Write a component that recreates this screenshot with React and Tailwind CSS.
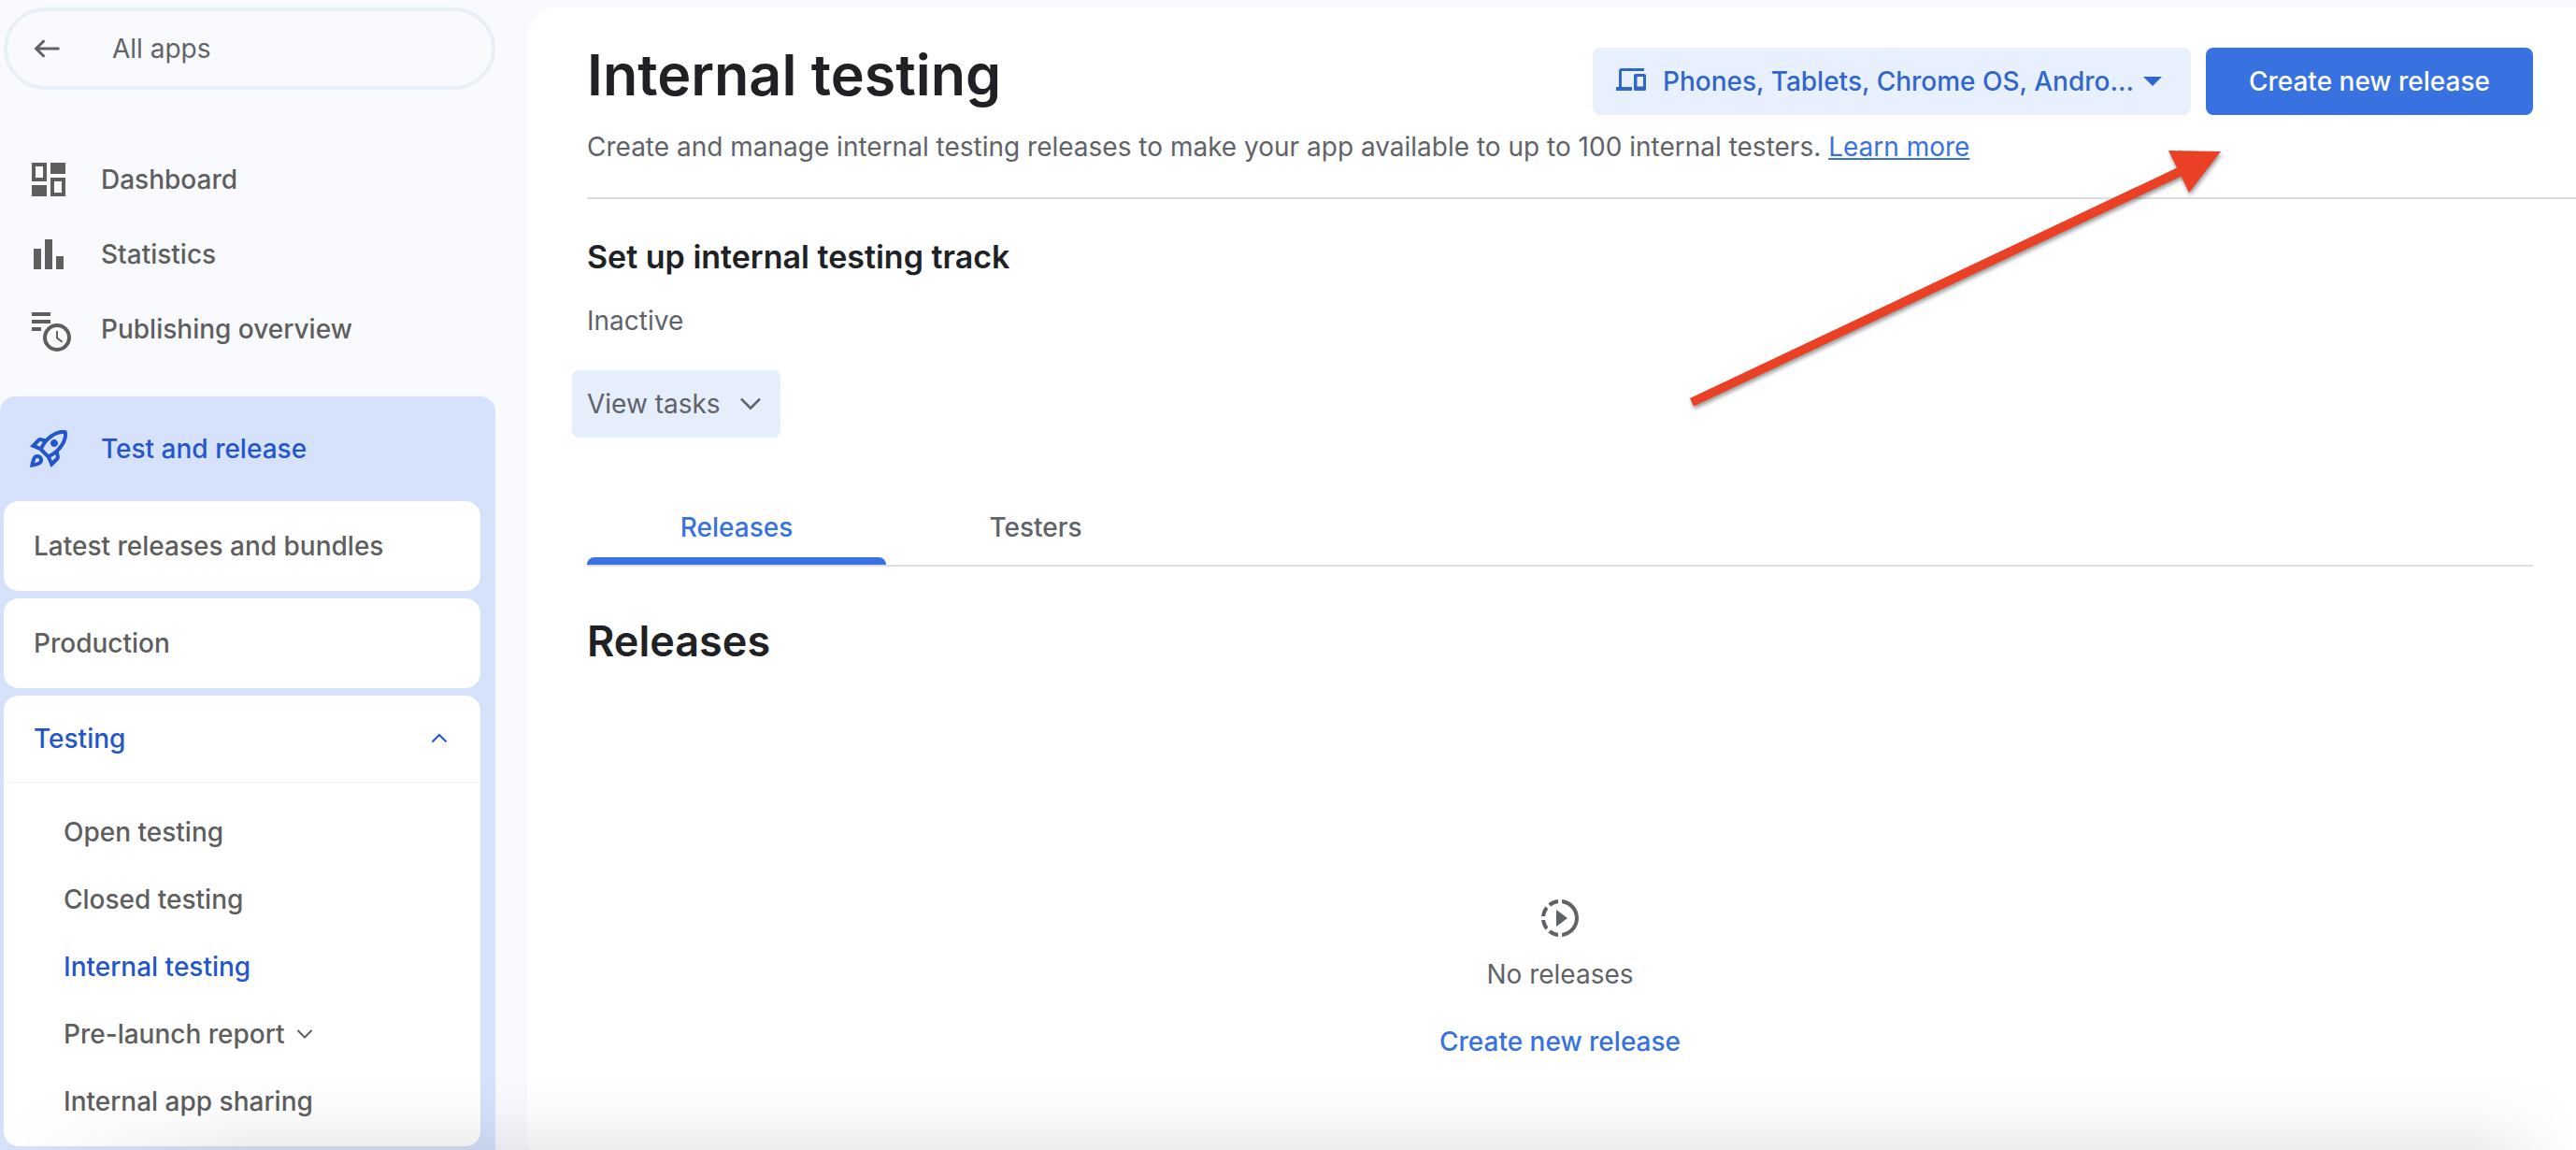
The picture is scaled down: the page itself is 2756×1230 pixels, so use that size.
import { MdOutlineRocketLaunch, MdSlowMotionVideo } from "react-icons/md";

function ArrowLeftIcon() {
  return (
    <svg width="28" height="20" viewBox="0 0 28 20" fill="none" stroke="currentColor" strokeWidth="3" aria-hidden="true">
      <path d="M27.5 10H3M11.5 1.2L2.6 10l8.9 8.8" />
    </svg>
  );
}

function DashboardIcon() {
  return (
    <svg width="48" height="48" viewBox="0 0 24 24" fill="currentColor" aria-hidden="true">
      <path fillRule="evenodd" d="M3 3h8v10H3zM5 5v6h4V5zM13 11h8v10h-8zM15 13v6h4v-6z" />
      <path d="M13 3h8v6h-8zM3 15h8v6H3z" />
    </svg>
  );
}

function StatisticsIcon() {
  return (
    <svg width="48" height="48" viewBox="0 0 24 24" fill="currentColor" aria-hidden="true">
      <path d="M4 9h4v11H4zM10 4h4v16h-4zM16 13h4v7h-4z" />
    </svg>
  );
}

function PublishingIcon() {
  return (
    <svg width="48" height="48" viewBox="0 0 24 24" aria-hidden="true">
      <path fill="currentColor" d="M3 3h10v2H3zM3 7h10v2H3zM3 11h5v2H3z" />
      <circle cx="16.5" cy="16.5" r="7.5" fill="#f9fafe" />
      <circle cx="16.5" cy="16.5" r="6.5" fill="none" stroke="currentColor" strokeWidth="2" />
      <path d="M16.5 13v3.8l2.8 2.1" fill="none" stroke="currentColor" strokeWidth="1" />
    </svg>
  );
}

function DevicesIcon() {
  return (
    <svg width="32" height="24" viewBox="0 0 32 24" aria-hidden="true">
      <path fill="none" stroke="currentColor" strokeWidth="3" d="M30 1.5H6Q4.5 1.5 4.5 3v17" />
      <path fill="currentColor" d="M0 20h17v4H0z" />
      <path fill="currentColor" fillRule="evenodd" d="M20.5 6h10Q32 6 32 7.500v15Q32 24 30.500 24h-10Q19 24 19 22.500v-15Q19 6 20.500 6zM22.500 9v10.500h6.500V9z" />
    </svg>
  );
}

function Chevron({ up = false, big = false }) {
  return (
    <svg
      width={big ? 24 : 18}
      height={big ? 16 : 12}
      viewBox="0 0 18 12"
      fill="none"
      stroke="currentColor"
      strokeWidth="2"
      aria-hidden="true"
    >
      <path d={up ? "M1.500 9.500L9 2l7.500 7.500" : "M1.500 2L9 9.500 16.500 2"} />
    </svg>
  );
}

const primaryNav = [
  { label: "Dashboard", Icon: DashboardIcon },
  { label: "Statistics", Icon: StatisticsIcon },
  { label: "Publishing overview", Icon: PublishingIcon },
];

const testingNav = [
  { label: "Open testing" },
  { label: "Closed testing" },
  { label: "Internal testing", active: true },
  { label: "Pre-launch report", expandable: true },
  { label: "Internal app sharing" },
];

function Sidebar() {
  return (
    <aside className="flex w-[564px] shrink-0 flex-col pr-[34px] pt-2 text-[28px] font-medium leading-10 text-[#5e5e5e]">
      <a href="#apps" className="ml-1 flex h-[88px] shrink-0 items-center rounded-full border-4 border-[#e9eff6] pl-7 font-normal text-[#5f6368]">
        <ArrowLeftIcon />
        <span className="ml-14">All apps</span>
      </a>

      <nav aria-label="Main" className="mt-14 shrink-0">
        {primaryNav.map(({ label, Icon }) => (
          <a key={label} href="#main" className="flex h-20 items-center gap-8 pl-7">
            <Icon />
            {label}
          </a>
        ))}
      </nav>

      <section className="mt-8 flex grow flex-col rounded-t-2xl bg-[#d6e2fc] pl-1 pr-4">
        <a href="#release" className="flex h-28 items-center gap-8 pl-6 text-[#2355cb]">
          <MdOutlineRocketLaunch size={48} />
          Test and release
        </a>
        <div className="flex flex-col gap-2">
          <a href="#latest" className="flex h-24 items-center rounded-2xl bg-white px-8">
            Latest releases and bundles
          </a>
          <a href="#production" className="flex h-24 items-center rounded-2xl bg-white px-8">
            Production
          </a>
          <div className="rounded-2xl bg-white">
            <button type="button" aria-expanded="true" className="flex h-[94px] w-full items-center justify-between border-b-2 border-[#f8f8f9] pl-8 pr-[35px] text-[#2355cb]">
              Testing
              <Chevron up />
            </button>
            <ul className="pb-3 pt-4">
              {testingNav.map(({ label, active, expandable }) => (
                <li key={label}>
                  <a
                    href="#testing"
                    className={`flex h-[72px] items-center gap-3 pl-16 ${active ? "text-[#2355cb]" : ""}`}
                  >
                    {label}
                    {expandable && <Chevron />}
                  </a>
                </li>
              ))}
            </ul>
          </div>
        </div>
      </section>
    </aside>
  );
}

function PointerArrow() {
  return (
    <svg
      className="pointer-events-none absolute right-[366px] top-[142px] drop-shadow-[1px_3px_2px_rgba(0,0,0,0.4)]"
      width="590"
      height="300"
      viewBox="1800 150 590 300"
      aria-hidden="true"
    >
      <path fill="#ea4025" d="M1808 426L2329 179.500L2320 161L2376 162L2342 206L2333.500 188.500L1812 434.500z" />
    </svg>
  );
}

export default function App() {
  return (
    <div className="relative flex h-screen overflow-hidden bg-[#f9fafe] font-['Inter','Roboto',sans-serif]">
      <Sidebar />

      <main className="relative -mb-4 mt-2 min-w-0 grow rounded-l-[32px] bg-white pl-16 text-[28px] leading-10 text-[#5f6368]">
        <header className="border-b-2 border-[#dcdce3] pb-[34px] pt-9">
          <div className="mr-[46px] flex items-start justify-between">
            <h1 className="text-[61px] font-semibold leading-[72px] text-[#202124]">Internal testing</h1>
            <div className="flex gap-4 pt-[7px]">
              <div className="relative text-[#3166cd]">
                <span className="pointer-events-none absolute inset-y-0 left-[25px] flex items-center pb-1">
                  <DevicesIcon />
                </span>
                <select
                  aria-label="Form factor"
                  className="h-[72px] w-[640px] appearance-none rounded-lg bg-[#e8f0fe] pl-[75px] pr-12 font-medium"
                >
                  <option>Phones, Tablets, Chrome OS, Andro...</option>
                </select>
                <span className="pointer-events-none absolute inset-y-0 right-[31px] flex items-center">
                  <svg width="20" height="10" viewBox="0 0 20 10" fill="currentColor" aria-hidden="true">
                    <path d="M0 0h20L10 10z" />
                  </svg>
                </span>
              </div>
              <button type="button" className="h-[72px] rounded-lg bg-[#3871e0] px-[46px] font-medium text-white">
                Create new release
              </button>
            </div>
          </div>
          <p className="mt-[14px]">
            Create and manage internal testing releases to make your app available to up to 100 internal testers.{" "}
            <a href="#learn" className="text-[#3871e0] underline decoration-2 underline-offset-2">
              Learn more
            </a>
          </p>
        </header>

        <section className="pt-10">
          <h2 className="text-[34px] font-semibold leading-[44px] text-[#202124]">Set up internal testing track</h2>
          <p className="mt-[26px]">Inactive</p>
          <button type="button" className="-ml-4 mt-[33px] flex h-[72px] items-center gap-5 rounded-lg bg-[#e6edfb] px-4 pr-5">
            View tasks
            <Chevron big />
          </button>
        </section>

        <div role="tablist" className="mr-[46px] mt-14 flex border-b-2 border-[#dcdce3] font-medium">
          <button type="button" role="tab" aria-selected="true" className="relative h-20 w-80 text-[#3871e0]">
            Releases
            <span className="absolute inset-x-0 bottom-0 h-2 rounded-t-lg bg-[#3871e0]" />
          </button>
          <button type="button" role="tab" aria-selected="false" className="h-20 w-80">
            Testers
          </button>
        </div>

        <section className="mr-[46px] pt-[52px]">
          <h2 className="text-[45px] font-semibold leading-[56px] text-[#202124]">Releases</h2>
          <div className="mt-[244px] flex flex-col items-center">
            <MdSlowMotionVideo size={48} />
            <p className="mt-4">No releases</p>
            <button type="button" className="mt-8 font-medium text-[#3871e0]">
              Create new release
            </button>
          </div>
        </section>

        <PointerArrow />
      </main>

      <div className="pointer-events-none absolute inset-x-0 bottom-0 h-20 bg-linear-to-b from-transparent via-black/2 to-black/7 mask-l-from-90% mask-r-from-96% mask-r-to-100%" />
    </div>
  );
}
